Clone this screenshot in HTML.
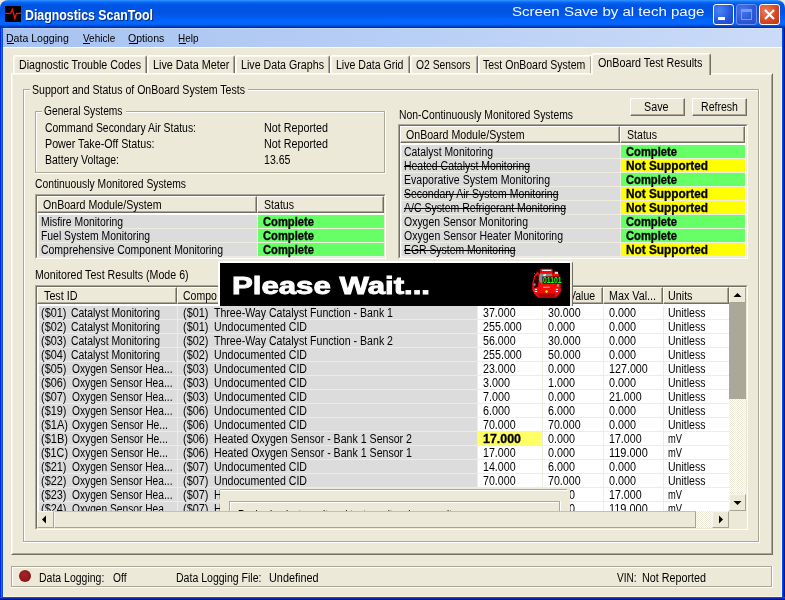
<!DOCTYPE html>
<html><head><meta charset="utf-8"><title>Diagnostics ScanTool</title>
<style>
html,body{margin:0;padding:0;}
body{width:785px;height:600px;overflow:hidden;background:#ece9d8;font-family:'Liberation Sans', sans-serif;font-size:11px;}
#w{position:relative;width:785px;height:600px;overflow:hidden;background:#ece9d8;will-change:transform;}
#w div{position:absolute;}
.t{position:absolute;white-space:pre;transform-origin:0 50%;}
</style></head><body><div id="w">
<div style="left:0px;top:0px;width:785px;height:28px;background:linear-gradient(to bottom,#3d95ff 0px,#1a80ff 1px,#0a72fc 2px,#0362f0 3px,#0056e5 4.5px,#0054e3 6px,#0054e3 13px,#0058ea 15px,#005ef4 18px,#0266fe 21px,#0267ff 24px,#005ceb 25px,#0046cc 26px,#0032a6 27.5px,#002f9e 28px);border-radius:8px 8px 0 0;"></div>
<div style="left:0px;top:28px;width:1px;height:572px;background:#0428d8"></div>
<div style="left:1px;top:28px;width:1px;height:572px;background:#166af0"></div>
<div style="left:2px;top:28px;width:1px;height:572px;background:#0450e0"></div>
<div style="left:3px;top:48px;width:1px;height:549px;background:#fdf4d8"></div>
<div style="left:781px;top:48px;width:1px;height:549px;background:#fdf4d8"></div>
<div style="left:3px;top:596px;width:779px;height:1px;background:#fdf4d8"></div>
<div style="left:782px;top:28px;width:1px;height:572px;background:#0a4ae8"></div>
<div style="left:783px;top:28px;width:1px;height:572px;background:#0430c0"></div>
<div style="left:784px;top:28px;width:1px;height:572px;background:#001590"></div>
<div style="left:0px;top:597px;width:785px;height:1px;background:#0a50f0"></div>
<div style="left:0px;top:598px;width:785px;height:1px;background:#0428b0"></div>
<div style="left:0px;top:599px;width:785px;height:1px;background:#001488"></div>
<div style="left:3px;top:28px;width:779px;height:19px;background:linear-gradient(to right,#a8c3f2 0%,#b7cef5 50%,#cbdbf8 100%);"></div>
<div style="left:3px;top:28px;width:779px;height:1px;background:rgba(255,255,255,0.25)"></div>
<div style="left:3px;top:47px;width:779px;height:1px;background:#fdfcf8"></div>
<div style="left:5px;top:6px;width:16px;height:16px;background:#000;"><svg width="16" height="16" viewBox="0 0 16 16" style="position:absolute;left:0;top:0"><path d="M0 7.4 H5.6 L7.3 3.2 L9.9 12.6 L11.4 7.4 H16" stroke="#ff1010" stroke-width="1.3" fill="none"/></svg></div>
<span class="t" style="left:26.00px;top:7.15px;font-size:14px;line-height:18px;color:#0a2a80;transform:scaleX(0.8814);font-weight:bold;">Diagnostics ScanTool</span>
<span class="t" style="left:25.00px;top:6.15px;font-size:14px;line-height:18px;color:#fff;transform:scaleX(0.8814);font-weight:bold;">Diagnostics ScanTool</span>
<span class="t" style="left:512.00px;top:3.00px;font-size:13px;line-height:17px;color:#f4f8ff;transform:scaleX(1.1580);">Screen Save by al tech page</span>
<div style="left:713px;top:4px;width:21px;height:21px;border:1px solid #fff;border-radius:3px;box-sizing:border-box;background:radial-gradient(circle at 30% 30%,#4c84f4,#2456dc 60%,#1a44c8);"><div style="left:4px;top:12px;width:7px;height:3px;background:#fff"></div></div>
<div style="left:736px;top:4px;width:21px;height:21px;border:1px solid #fff;border-radius:3px;box-sizing:border-box;border-color:#6f8fe8;background:radial-gradient(circle at 30% 30%,#4677ee,#2a58d8 60%,#2450cc);"><div style="left:4px;top:4px;width:11px;height:11px;box-sizing:border-box;border:1px solid #7c98ea;border-top:3px solid #7c98ea"></div></div>
<div style="left:759px;top:4px;width:21px;height:21px;border:1px solid #fff;border-radius:3px;box-sizing:border-box;background:radial-gradient(circle at 30% 30%,#ee7a58,#d8441c 60%,#c03410);"><svg width="19" height="19" viewBox="0 0 19 19" style="position:absolute;left:0;top:0"><path d="M5 5 L14 14 M14 5 L5 14" stroke="#fff" stroke-width="2.2"/></svg></div>
<span class="t" style="left:6.00px;top:30.99px;font-size:11px;line-height:14px;color:#000;transform:scaleX(0.9595);">Data Logging</span>
<div style="left:7px;top:43px;width:7px;height:1px;background:#000"></div>
<span class="t" style="left:82.50px;top:30.99px;font-size:11px;line-height:14px;color:#000;transform:scaleX(0.9074);">Vehicle</span>
<div style="left:83px;top:43px;width:7px;height:1px;background:#000"></div>
<span class="t" style="left:128.20px;top:30.99px;font-size:11px;line-height:14px;color:#000;transform:scaleX(0.9599);">Options</span>
<div style="left:129px;top:43px;width:8px;height:1px;background:#000"></div>
<span class="t" style="left:177.80px;top:30.99px;font-size:11px;line-height:14px;color:#000;transform:scaleX(0.9017);">Help</span>
<div style="left:179px;top:43px;width:7px;height:1px;background:#000"></div>
<div style="left:11px;top:73px;width:762px;height:482px;box-sizing:border-box;border-left:1px solid #fff;border-top:1px solid #fff;border-right:1px solid #716f64;border-bottom:1px solid #716f64;"></div>
<div style="left:12px;top:74px;width:760px;height:480px;box-sizing:border-box;border-right:1px solid #aca899;border-bottom:1px solid #aca899;border-left:1px solid #f6f5ee;border-top:1px solid #f6f5ee;"></div>
<div style="left:13px;top:55px;width:134px;height:18px;box-sizing:border-box;border-left:1px solid #fff;border-top:1px solid #fff;border-right:1px solid #716f64;border-radius:3px 3px 0 0;background:#ece9d8;box-shadow:inset 1px 1px 0 #f8f7f0,inset -1px 0 0 #aca899;"></div>
<span class="t" style="left:19.00px;top:57.24px;font-size:12px;line-height:16px;color:#000;transform:scaleX(0.8878);">Diagnostic Trouble Codes</span>
<div style="left:147px;top:55px;width:88px;height:18px;box-sizing:border-box;border-left:1px solid #fff;border-top:1px solid #fff;border-right:1px solid #716f64;border-radius:3px 3px 0 0;background:#ece9d8;box-shadow:inset 1px 1px 0 #f8f7f0,inset -1px 0 0 #aca899;"></div>
<span class="t" style="left:152.50px;top:57.24px;font-size:12px;line-height:16px;color:#000;transform:scaleX(0.9020);">Live Data Meter</span>
<div style="left:235px;top:55px;width:95px;height:18px;box-sizing:border-box;border-left:1px solid #fff;border-top:1px solid #fff;border-right:1px solid #716f64;border-radius:3px 3px 0 0;background:#ece9d8;box-shadow:inset 1px 1px 0 #f8f7f0,inset -1px 0 0 #aca899;"></div>
<span class="t" style="left:240.50px;top:57.24px;font-size:12px;line-height:16px;color:#000;transform:scaleX(0.8887);">Live Data Graphs</span>
<div style="left:330px;top:55px;width:80px;height:18px;box-sizing:border-box;border-left:1px solid #fff;border-top:1px solid #fff;border-right:1px solid #716f64;border-radius:3px 3px 0 0;background:#ece9d8;box-shadow:inset 1px 1px 0 #f8f7f0,inset -1px 0 0 #aca899;"></div>
<span class="t" style="left:335.90px;top:57.24px;font-size:12px;line-height:16px;color:#000;transform:scaleX(0.8800);">Live Data Grid</span>
<div style="left:410px;top:55px;width:68px;height:18px;box-sizing:border-box;border-left:1px solid #fff;border-top:1px solid #fff;border-right:1px solid #716f64;border-radius:3px 3px 0 0;background:#ece9d8;box-shadow:inset 1px 1px 0 #f8f7f0,inset -1px 0 0 #aca899;"></div>
<span class="t" style="left:416.00px;top:57.24px;font-size:12px;line-height:16px;color:#000;transform:scaleX(0.8600);">O2 Sensors</span>
<div style="left:478px;top:55px;width:114px;height:18px;box-sizing:border-box;border-left:1px solid #fff;border-top:1px solid #fff;border-right:1px solid #716f64;border-radius:3px 3px 0 0;background:#ece9d8;box-shadow:inset 1px 1px 0 #f8f7f0,inset -1px 0 0 #aca899;"></div>
<span class="t" style="left:483.20px;top:57.24px;font-size:12px;line-height:16px;color:#000;transform:scaleX(0.8765);">Test OnBoard System</span>
<div style="left:591px;top:53px;width:120px;height:22px;box-sizing:border-box;border-left:1px solid #fff;border-top:1px solid #fff;border-right:1px solid #716f64;border-radius:3px 3px 0 0;background:#ece9d8;box-shadow:inset 1px 1px 0 #f8f7f0,inset -1px 0 0 #aca899;"></div>
<span class="t" style="left:598.00px;top:55.24px;font-size:12px;line-height:16px;color:#000;transform:scaleX(0.8969);">OnBoard Test Results</span>
<div style="left:23px;top:89px;width:736px;height:453px;box-sizing:border-box;border:1px solid #aca899;"></div>
<div style="left:24px;top:90px;width:734px;height:451px;box-sizing:border-box;border:1px solid #fff;border-right:none;border-bottom:none;"></div>
<div style="left:759px;top:89px;width:1px;height:454px;background:#fff"></div>
<div style="left:23px;top:542px;width:737px;height:1px;background:#fff"></div>
<div style="left:30px;top:84px;width:218px;height:12px;background:#ece9d8"></div>
<span class="t" style="left:32.30px;top:82.24px;font-size:12px;line-height:16px;color:#000;transform:scaleX(0.8804);">Support and Status of OnBoard System Tests</span>
<div style="left:35px;top:111px;width:350px;height:62px;box-sizing:border-box;border:1px solid #aca899;"></div>
<div style="left:36px;top:112px;width:348px;height:60px;box-sizing:border-box;border:1px solid #fff;border-right:none;border-bottom:none;"></div>
<div style="left:385px;top:111px;width:1px;height:63px;background:#fff"></div>
<div style="left:35px;top:173px;width:351px;height:1px;background:#fff"></div>
<div style="left:42px;top:106px;width:84px;height:12px;background:#ece9d8"></div>
<span class="t" style="left:44.20px;top:103.24px;font-size:12px;line-height:16px;color:#000;transform:scaleX(0.8528);">General Systems</span>
<span class="t" style="left:45.00px;top:120.24px;font-size:12px;line-height:16px;color:#000;transform:scaleX(0.8673);">Command Secondary Air Status:</span>
<span class="t" style="left:45.00px;top:136.24px;font-size:12px;line-height:16px;color:#000;transform:scaleX(0.8906);">Power Take-Off Status:</span>
<span class="t" style="left:45.00px;top:152.24px;font-size:12px;line-height:16px;color:#000;transform:scaleX(0.8733);">Battery Voltage:</span>
<span class="t" style="left:264.10px;top:120.24px;font-size:12px;line-height:16px;color:#000;transform:scaleX(0.8967);">Not Reported</span>
<span class="t" style="left:264.10px;top:136.24px;font-size:12px;line-height:16px;color:#000;transform:scaleX(0.8967);">Not Reported</span>
<span class="t" style="left:264.10px;top:152.24px;font-size:12px;line-height:16px;color:#000;transform:scaleX(0.8824);">13.65</span>
<span class="t" style="left:35.30px;top:176.24px;font-size:12px;line-height:16px;color:#000;transform:scaleX(0.8608);">Continuously Monitored Systems</span>
<span class="t" style="left:398.50px;top:107.24px;font-size:12px;line-height:16px;color:#000;transform:scaleX(0.8639);">Non-Continuously Monitored Systems</span>
<span class="t" style="left:35.20px;top:267.24px;font-size:12px;line-height:16px;color:#000;transform:scaleX(0.8869);">Monitored Test Results (Mode 6)</span>
<div style="left:630px;top:98px;width:55px;height:18px;box-sizing:border-box;border-left:1px solid #fff;border-top:1px solid #fff;border-right:1px solid #716f64;border-bottom:1px solid #716f64;background:#ece9d8;"></div>
<div style="left:631px;top:99px;width:53px;height:16px;box-sizing:border-box;border-right:1px solid #aca899;border-bottom:1px solid #aca899;"></div>
<span class="t" style="left:644.00px;top:98.84px;font-size:12px;line-height:16px;color:#000;transform:scaleX(0.8955);">Save</span>
<div style="left:692px;top:98px;width:55px;height:18px;box-sizing:border-box;border-left:1px solid #fff;border-top:1px solid #fff;border-right:1px solid #716f64;border-bottom:1px solid #716f64;background:#ece9d8;"></div>
<div style="left:693px;top:99px;width:53px;height:16px;box-sizing:border-box;border-right:1px solid #aca899;border-bottom:1px solid #aca899;"></div>
<span class="t" style="left:701.00px;top:98.84px;font-size:12px;line-height:16px;color:#000;transform:scaleX(0.8803);">Refresh</span>
<div style="left:35px;top:194px;width:351px;height:65px;box-sizing:border-box;border-left:1px solid #aca899;border-top:1px solid #aca899;border-right:1px solid #fff;border-bottom:1px solid #fff;background:#fff;"></div>
<div style="left:36px;top:195px;width:349px;height:63px;box-sizing:border-box;border-left:1px solid #716f64;border-top:1px solid #716f64;border-right:1px solid #ece9d8;border-bottom:1px solid #ece9d8;"></div>
<div style="left:37px;top:196px;width:220px;height:17px;box-sizing:border-box;border-left:1px solid #fff;border-top:1px solid #fff;border-right:1px solid #716f64;border-bottom:1px solid #716f64;background:#ece9d8;"></div>
<div style="left:38px;top:197px;width:218px;height:15px;box-sizing:border-box;border-right:1px solid #aca899;border-bottom:1px solid #aca899;"></div>
<span class="t" style="left:43.00px;top:197.24px;font-size:12px;line-height:16px;color:#000;transform:scaleX(0.8839);">OnBoard Module/System</span>
<div style="left:257px;top:196px;width:127px;height:17px;box-sizing:border-box;border-left:1px solid #fff;border-top:1px solid #fff;border-right:1px solid #716f64;border-bottom:1px solid #716f64;background:#ece9d8;"></div>
<div style="left:258px;top:197px;width:125px;height:15px;box-sizing:border-box;border-right:1px solid #aca899;border-bottom:1px solid #aca899;"></div>
<span class="t" style="left:263.50px;top:197.24px;font-size:12px;line-height:16px;color:#000;transform:scaleX(0.8815);">Status</span>
<div style="left:38px;top:215px;width:346px;height:42px;background:#efece0"></div>
<div style="left:39px;top:215px;width:218px;height:13px;background:#dcdcdc"></div>
<div style="left:258px;top:215px;width:126px;height:13px;background:#66ff66"></div>
<span class="t" style="left:41.00px;top:214.24px;font-size:12px;line-height:16px;color:#000;transform:scaleX(0.8659);">Misfire Monitoring</span>
<span class="t" style="left:263.00px;top:214.24px;font-size:12px;line-height:16px;color:#000;transform:scaleX(0.9326);font-weight:bold;-webkit-text-stroke:0.3px #000;">Complete</span>
<div style="left:39px;top:229px;width:218px;height:13px;background:#dcdcdc"></div>
<div style="left:258px;top:229px;width:126px;height:13px;background:#66ff66"></div>
<span class="t" style="left:41.00px;top:228.24px;font-size:12px;line-height:16px;color:#000;transform:scaleX(0.8648);">Fuel System Monitoring</span>
<span class="t" style="left:263.00px;top:228.24px;font-size:12px;line-height:16px;color:#000;transform:scaleX(0.9326);font-weight:bold;-webkit-text-stroke:0.3px #000;">Complete</span>
<div style="left:39px;top:243px;width:218px;height:13px;background:#dcdcdc"></div>
<div style="left:258px;top:243px;width:126px;height:13px;background:#66ff66"></div>
<span class="t" style="left:41.00px;top:242.24px;font-size:12px;line-height:16px;color:#000;transform:scaleX(0.8717);">Comprehensive Component Monitoring</span>
<span class="t" style="left:263.00px;top:242.24px;font-size:12px;line-height:16px;color:#000;transform:scaleX(0.9326);font-weight:bold;-webkit-text-stroke:0.3px #000;">Complete</span>
<div style="left:398px;top:124px;width:350px;height:135px;box-sizing:border-box;border-left:1px solid #aca899;border-top:1px solid #aca899;border-right:1px solid #fff;border-bottom:1px solid #fff;background:#fff;"></div>
<div style="left:399px;top:125px;width:348px;height:133px;box-sizing:border-box;border-left:1px solid #716f64;border-top:1px solid #716f64;border-right:1px solid #ece9d8;border-bottom:1px solid #ece9d8;"></div>
<div style="left:400px;top:126px;width:220px;height:17px;box-sizing:border-box;border-left:1px solid #fff;border-top:1px solid #fff;border-right:1px solid #716f64;border-bottom:1px solid #716f64;background:#ece9d8;"></div>
<div style="left:401px;top:127px;width:218px;height:15px;box-sizing:border-box;border-right:1px solid #aca899;border-bottom:1px solid #aca899;"></div>
<span class="t" style="left:406.00px;top:127.24px;font-size:12px;line-height:16px;color:#000;transform:scaleX(0.8839);">OnBoard Module/System</span>
<div style="left:620px;top:126px;width:125px;height:17px;box-sizing:border-box;border-left:1px solid #fff;border-top:1px solid #fff;border-right:1px solid #716f64;border-bottom:1px solid #716f64;background:#ece9d8;"></div>
<div style="left:621px;top:127px;width:123px;height:15px;box-sizing:border-box;border-right:1px solid #aca899;border-bottom:1px solid #aca899;"></div>
<span class="t" style="left:626.50px;top:127.24px;font-size:12px;line-height:16px;color:#000;transform:scaleX(0.8815);">Status</span>
<div style="left:401px;top:145px;width:344px;height:112px;background:#efece0"></div>
<div style="left:402px;top:145px;width:218px;height:13px;background:#dcdcdc"></div>
<div style="left:621px;top:145px;width:124px;height:13px;background:#66ff66"></div>
<span class="t" style="left:404.00px;top:144.24px;font-size:12px;line-height:16px;color:#000;transform:scaleX(0.8664);">Catalyst Monitoring</span>
<span class="t" style="left:626.00px;top:144.24px;font-size:12px;line-height:16px;color:#000;transform:scaleX(0.9326);font-weight:bold;-webkit-text-stroke:0.3px #000;">Complete</span>
<div style="left:402px;top:159px;width:218px;height:13px;background:#dcdcdc"></div>
<div style="left:621px;top:159px;width:124px;height:13px;background:#ffff00"></div>
<span class="t" style="left:404.00px;top:158.24px;font-size:12px;line-height:16px;color:#000;transform:scaleX(0.8705);text-decoration:line-through;">Heated Catalyst Monitoring</span>
<span class="t" style="left:626.00px;top:158.24px;font-size:12px;line-height:16px;color:#000;transform:scaleX(0.9841);font-weight:bold;-webkit-text-stroke:0.3px #000;">Not Supported</span>
<div style="left:402px;top:173px;width:218px;height:13px;background:#dcdcdc"></div>
<div style="left:621px;top:173px;width:124px;height:13px;background:#66ff66"></div>
<span class="t" style="left:404.00px;top:172.24px;font-size:12px;line-height:16px;color:#000;transform:scaleX(0.8791);">Evaporative System Monitoring</span>
<span class="t" style="left:626.00px;top:172.24px;font-size:12px;line-height:16px;color:#000;transform:scaleX(0.9326);font-weight:bold;-webkit-text-stroke:0.3px #000;">Complete</span>
<div style="left:402px;top:187px;width:218px;height:13px;background:#dcdcdc"></div>
<div style="left:621px;top:187px;width:124px;height:13px;background:#ffff00"></div>
<span class="t" style="left:404.00px;top:186.24px;font-size:12px;line-height:16px;color:#000;transform:scaleX(0.8708);text-decoration:line-through;">Secondary Air System Monitoring</span>
<span class="t" style="left:626.00px;top:186.24px;font-size:12px;line-height:16px;color:#000;transform:scaleX(0.9841);font-weight:bold;-webkit-text-stroke:0.3px #000;">Not Supported</span>
<div style="left:402px;top:201px;width:218px;height:13px;background:#dcdcdc"></div>
<div style="left:621px;top:201px;width:124px;height:13px;background:#ffff00"></div>
<span class="t" style="left:404.00px;top:200.24px;font-size:12px;line-height:16px;color:#000;transform:scaleX(0.8738);text-decoration:line-through;">A/C System Refrigerant Monitoring</span>
<span class="t" style="left:626.00px;top:200.24px;font-size:12px;line-height:16px;color:#000;transform:scaleX(0.9841);font-weight:bold;-webkit-text-stroke:0.3px #000;">Not Supported</span>
<div style="left:402px;top:215px;width:218px;height:13px;background:#dcdcdc"></div>
<div style="left:621px;top:215px;width:124px;height:13px;background:#66ff66"></div>
<span class="t" style="left:404.00px;top:214.24px;font-size:12px;line-height:16px;color:#000;transform:scaleX(0.8728);">Oxygen Sensor Monitoring</span>
<span class="t" style="left:626.00px;top:214.24px;font-size:12px;line-height:16px;color:#000;transform:scaleX(0.9326);font-weight:bold;-webkit-text-stroke:0.3px #000;">Complete</span>
<div style="left:402px;top:229px;width:218px;height:13px;background:#dcdcdc"></div>
<div style="left:621px;top:229px;width:124px;height:13px;background:#66ff66"></div>
<span class="t" style="left:404.00px;top:228.24px;font-size:12px;line-height:16px;color:#000;transform:scaleX(0.8763);">Oxygen Sensor Heater Monitoring</span>
<span class="t" style="left:626.00px;top:228.24px;font-size:12px;line-height:16px;color:#000;transform:scaleX(0.9326);font-weight:bold;-webkit-text-stroke:0.3px #000;">Complete</span>
<div style="left:402px;top:243px;width:218px;height:13px;background:#dcdcdc"></div>
<div style="left:621px;top:243px;width:124px;height:13px;background:#ffff00"></div>
<span class="t" style="left:404.00px;top:242.24px;font-size:12px;line-height:16px;color:#000;transform:scaleX(0.8662);text-decoration:line-through;">EGR System Monitoring</span>
<span class="t" style="left:626.00px;top:242.24px;font-size:12px;line-height:16px;color:#000;transform:scaleX(0.9841);font-weight:bold;-webkit-text-stroke:0.3px #000;">Not Supported</span>
<div style="left:35px;top:285px;width:713px;height:245px;box-sizing:border-box;border-left:1px solid #aca899;border-top:1px solid #aca899;border-right:1px solid #fff;border-bottom:1px solid #fff;background:#fff;"></div>
<div style="left:36px;top:286px;width:711px;height:243px;box-sizing:border-box;border-left:1px solid #716f64;border-top:1px solid #716f64;border-right:1px solid #ece9d8;border-bottom:1px solid #ece9d8;"></div>
<div style="left:37px;top:287px;width:140px;height:17px;box-sizing:border-box;border-left:1px solid #fff;border-top:1px solid #fff;border-right:1px solid #716f64;border-bottom:1px solid #716f64;background:#ece9d8;"></div>
<div style="left:38px;top:288px;width:138px;height:15px;box-sizing:border-box;border-right:1px solid #aca899;border-bottom:1px solid #aca899;"></div>
<span class="t" style="left:43.50px;top:288.24px;font-size:12px;line-height:16px;color:#000;transform:scaleX(0.8971);">Test ID</span>
<div style="left:177px;top:287px;width:300px;height:17px;box-sizing:border-box;border-left:1px solid #fff;border-top:1px solid #fff;border-right:1px solid #716f64;border-bottom:1px solid #716f64;background:#ece9d8;"></div>
<div style="left:178px;top:288px;width:298px;height:15px;box-sizing:border-box;border-right:1px solid #aca899;border-bottom:1px solid #aca899;"></div>
<span class="t" style="left:183.00px;top:288.24px;font-size:12px;line-height:16px;color:#000;transform:scaleX(0.8750);">Compo</span>
<div style="left:477px;top:287px;width:65px;height:17px;box-sizing:border-box;border-left:1px solid #fff;border-top:1px solid #fff;border-right:1px solid #716f64;border-bottom:1px solid #716f64;background:#ece9d8;"></div>
<div style="left:478px;top:288px;width:63px;height:15px;box-sizing:border-box;border-right:1px solid #aca899;border-bottom:1px solid #aca899;"></div>
<div style="left:542px;top:287px;width:61px;height:17px;box-sizing:border-box;border-left:1px solid #fff;border-top:1px solid #fff;border-right:1px solid #716f64;border-bottom:1px solid #716f64;background:#ece9d8;"></div>
<div style="left:543px;top:288px;width:59px;height:15px;box-sizing:border-box;border-right:1px solid #aca899;border-bottom:1px solid #aca899;"></div>
<span class="t" style="left:568.80px;top:288.24px;font-size:12px;line-height:16px;color:#000;transform:scaleX(0.8750);">Value</span>
<div style="left:603px;top:287px;width:60px;height:17px;box-sizing:border-box;border-left:1px solid #fff;border-top:1px solid #fff;border-right:1px solid #716f64;border-bottom:1px solid #716f64;background:#ece9d8;"></div>
<div style="left:604px;top:288px;width:58px;height:15px;box-sizing:border-box;border-right:1px solid #aca899;border-bottom:1px solid #aca899;"></div>
<span class="t" style="left:608.50px;top:288.24px;font-size:12px;line-height:16px;color:#000;transform:scaleX(0.8958);">Max Val...</span>
<div style="left:663px;top:287px;width:66px;height:17px;box-sizing:border-box;border-left:1px solid #fff;border-top:1px solid #fff;border-right:1px solid #716f64;border-bottom:1px solid #716f64;background:#ece9d8;"></div>
<div style="left:664px;top:288px;width:64px;height:15px;box-sizing:border-box;border-right:1px solid #aca899;border-bottom:1px solid #aca899;"></div>
<span class="t" style="left:668.00px;top:288.24px;font-size:12px;line-height:16px;color:#000;transform:scaleX(0.8960);">Units</span>
<div style="left:729px;top:287px;width:17px;height:17px;background:#ece9d8"></div>
<div style="left:37px;top:304px;width:692px;height:2px;background:#fff"></div>
<div style="left:37px;top:306px;width:2px;height:205px;background:#fff"></div>
<div style="left:39px;top:306px;width:690px;height:205px;background:#efece0"></div>
<div style="left:37px;top:305px;width:692px;height:206px;overflow:hidden">
<div style="left:2px;top:1px;width:138px;height:13px;background:#dcdcdc"></div>
<div style="left:141px;top:1px;width:299px;height:13px;background:#dcdcdc"></div>
<div style="left:441px;top:1px;width:64px;height:13px;background:#fff"></div>
<div style="left:506px;top:1px;width:60px;height:13px;background:#fff"></div>
<div style="left:567px;top:1px;width:59px;height:13px;background:#fff"></div>
<div style="left:627px;top:1px;width:65px;height:13px;background:#fff"></div>
<div style="left:2px;top:15px;width:138px;height:13px;background:#dcdcdc"></div>
<div style="left:141px;top:15px;width:299px;height:13px;background:#dcdcdc"></div>
<div style="left:441px;top:15px;width:64px;height:13px;background:#fff"></div>
<div style="left:506px;top:15px;width:60px;height:13px;background:#fff"></div>
<div style="left:567px;top:15px;width:59px;height:13px;background:#fff"></div>
<div style="left:627px;top:15px;width:65px;height:13px;background:#fff"></div>
<div style="left:2px;top:29px;width:138px;height:13px;background:#dcdcdc"></div>
<div style="left:141px;top:29px;width:299px;height:13px;background:#dcdcdc"></div>
<div style="left:441px;top:29px;width:64px;height:13px;background:#fff"></div>
<div style="left:506px;top:29px;width:60px;height:13px;background:#fff"></div>
<div style="left:567px;top:29px;width:59px;height:13px;background:#fff"></div>
<div style="left:627px;top:29px;width:65px;height:13px;background:#fff"></div>
<div style="left:2px;top:43px;width:138px;height:13px;background:#dcdcdc"></div>
<div style="left:141px;top:43px;width:299px;height:13px;background:#dcdcdc"></div>
<div style="left:441px;top:43px;width:64px;height:13px;background:#fff"></div>
<div style="left:506px;top:43px;width:60px;height:13px;background:#fff"></div>
<div style="left:567px;top:43px;width:59px;height:13px;background:#fff"></div>
<div style="left:627px;top:43px;width:65px;height:13px;background:#fff"></div>
<div style="left:2px;top:57px;width:138px;height:13px;background:#dcdcdc"></div>
<div style="left:141px;top:57px;width:299px;height:13px;background:#dcdcdc"></div>
<div style="left:441px;top:57px;width:64px;height:13px;background:#fff"></div>
<div style="left:506px;top:57px;width:60px;height:13px;background:#fff"></div>
<div style="left:567px;top:57px;width:59px;height:13px;background:#fff"></div>
<div style="left:627px;top:57px;width:65px;height:13px;background:#fff"></div>
<div style="left:2px;top:71px;width:138px;height:13px;background:#dcdcdc"></div>
<div style="left:141px;top:71px;width:299px;height:13px;background:#dcdcdc"></div>
<div style="left:441px;top:71px;width:64px;height:13px;background:#fff"></div>
<div style="left:506px;top:71px;width:60px;height:13px;background:#fff"></div>
<div style="left:567px;top:71px;width:59px;height:13px;background:#fff"></div>
<div style="left:627px;top:71px;width:65px;height:13px;background:#fff"></div>
<div style="left:2px;top:85px;width:138px;height:13px;background:#dcdcdc"></div>
<div style="left:141px;top:85px;width:299px;height:13px;background:#dcdcdc"></div>
<div style="left:441px;top:85px;width:64px;height:13px;background:#fff"></div>
<div style="left:506px;top:85px;width:60px;height:13px;background:#fff"></div>
<div style="left:567px;top:85px;width:59px;height:13px;background:#fff"></div>
<div style="left:627px;top:85px;width:65px;height:13px;background:#fff"></div>
<div style="left:2px;top:99px;width:138px;height:13px;background:#dcdcdc"></div>
<div style="left:141px;top:99px;width:299px;height:13px;background:#dcdcdc"></div>
<div style="left:441px;top:99px;width:64px;height:13px;background:#fff"></div>
<div style="left:506px;top:99px;width:60px;height:13px;background:#fff"></div>
<div style="left:567px;top:99px;width:59px;height:13px;background:#fff"></div>
<div style="left:627px;top:99px;width:65px;height:13px;background:#fff"></div>
<div style="left:2px;top:113px;width:138px;height:13px;background:#dcdcdc"></div>
<div style="left:141px;top:113px;width:299px;height:13px;background:#dcdcdc"></div>
<div style="left:441px;top:113px;width:64px;height:13px;background:#fff"></div>
<div style="left:506px;top:113px;width:60px;height:13px;background:#fff"></div>
<div style="left:567px;top:113px;width:59px;height:13px;background:#fff"></div>
<div style="left:627px;top:113px;width:65px;height:13px;background:#fff"></div>
<div style="left:2px;top:127px;width:138px;height:13px;background:#dcdcdc"></div>
<div style="left:141px;top:127px;width:299px;height:13px;background:#dcdcdc"></div>
<div style="left:441px;top:127px;width:64px;height:13px;background:#ffff66"></div>
<div style="left:506px;top:127px;width:60px;height:13px;background:#fff"></div>
<div style="left:567px;top:127px;width:59px;height:13px;background:#fff"></div>
<div style="left:627px;top:127px;width:65px;height:13px;background:#fff"></div>
<div style="left:2px;top:141px;width:138px;height:13px;background:#dcdcdc"></div>
<div style="left:141px;top:141px;width:299px;height:13px;background:#dcdcdc"></div>
<div style="left:441px;top:141px;width:64px;height:13px;background:#fff"></div>
<div style="left:506px;top:141px;width:60px;height:13px;background:#fff"></div>
<div style="left:567px;top:141px;width:59px;height:13px;background:#fff"></div>
<div style="left:627px;top:141px;width:65px;height:13px;background:#fff"></div>
<div style="left:2px;top:155px;width:138px;height:13px;background:#dcdcdc"></div>
<div style="left:141px;top:155px;width:299px;height:13px;background:#dcdcdc"></div>
<div style="left:441px;top:155px;width:64px;height:13px;background:#fff"></div>
<div style="left:506px;top:155px;width:60px;height:13px;background:#fff"></div>
<div style="left:567px;top:155px;width:59px;height:13px;background:#fff"></div>
<div style="left:627px;top:155px;width:65px;height:13px;background:#fff"></div>
<div style="left:2px;top:169px;width:138px;height:13px;background:#dcdcdc"></div>
<div style="left:141px;top:169px;width:299px;height:13px;background:#dcdcdc"></div>
<div style="left:441px;top:169px;width:64px;height:13px;background:#fff"></div>
<div style="left:506px;top:169px;width:60px;height:13px;background:#fff"></div>
<div style="left:567px;top:169px;width:59px;height:13px;background:#fff"></div>
<div style="left:627px;top:169px;width:65px;height:13px;background:#fff"></div>
<div style="left:2px;top:183px;width:138px;height:13px;background:#dcdcdc"></div>
<div style="left:141px;top:183px;width:299px;height:13px;background:#dcdcdc"></div>
<div style="left:441px;top:183px;width:64px;height:13px;background:#fff"></div>
<div style="left:506px;top:183px;width:60px;height:13px;background:#fff"></div>
<div style="left:567px;top:183px;width:59px;height:13px;background:#fff"></div>
<div style="left:627px;top:183px;width:65px;height:13px;background:#fff"></div>
<div style="left:2px;top:197px;width:138px;height:13px;background:#dcdcdc"></div>
<div style="left:141px;top:197px;width:299px;height:13px;background:#dcdcdc"></div>
<div style="left:441px;top:197px;width:64px;height:13px;background:#fff"></div>
<div style="left:506px;top:197px;width:60px;height:13px;background:#fff"></div>
<div style="left:567px;top:197px;width:59px;height:13px;background:#fff"></div>
<div style="left:627px;top:197px;width:65px;height:13px;background:#fff"></div>
</div>
<div style="left:37px;top:305px;width:692px;height:206px;overflow:hidden">
<span class="t" style="left:4.00px;top:-0.26px;font-size:12px;line-height:16px;color:#000;transform:scaleX(0.9102);">($01)</span>
<span class="t" style="left:34.10px;top:-0.26px;font-size:12px;line-height:16px;color:#000;transform:scaleX(0.8664);">Catalyst Monitoring</span>
<span class="t" style="left:146.00px;top:-0.26px;font-size:12px;line-height:16px;color:#000;transform:scaleX(0.9102);">($01)</span>
<span class="t" style="left:176.50px;top:-0.26px;font-size:12px;line-height:16px;color:#000;transform:scaleX(0.8819);">Three-Way Catalyst Function - Bank 1</span>
<span class="t" style="left:446.20px;top:-0.26px;font-size:12px;line-height:16px;color:#000;transform:scaleX(0.8882);">37.000</span>
<span class="t" style="left:511.40px;top:-0.26px;font-size:12px;line-height:16px;color:#000;transform:scaleX(0.8882);">30.000</span>
<span class="t" style="left:571.50px;top:-0.26px;font-size:12px;line-height:16px;color:#000;transform:scaleX(0.8991);">0.000</span>
<span class="t" style="left:630.50px;top:-0.26px;font-size:12px;line-height:16px;color:#000;transform:scaleX(0.8785);">Unitless</span>
<span class="t" style="left:4.00px;top:13.74px;font-size:12px;line-height:16px;color:#000;transform:scaleX(0.9102);">($02)</span>
<span class="t" style="left:34.10px;top:13.74px;font-size:12px;line-height:16px;color:#000;transform:scaleX(0.8664);">Catalyst Monitoring</span>
<span class="t" style="left:146.00px;top:13.74px;font-size:12px;line-height:16px;color:#000;transform:scaleX(0.9102);">($01)</span>
<span class="t" style="left:176.50px;top:13.74px;font-size:12px;line-height:16px;color:#000;transform:scaleX(0.8824);">Undocumented CID</span>
<span class="t" style="left:446.20px;top:13.74px;font-size:12px;line-height:16px;color:#000;transform:scaleX(0.8942);">255.000</span>
<span class="t" style="left:511.40px;top:13.74px;font-size:12px;line-height:16px;color:#000;transform:scaleX(0.8991);">0.000</span>
<span class="t" style="left:571.50px;top:13.74px;font-size:12px;line-height:16px;color:#000;transform:scaleX(0.8991);">0.000</span>
<span class="t" style="left:630.50px;top:13.74px;font-size:12px;line-height:16px;color:#000;transform:scaleX(0.8785);">Unitless</span>
<span class="t" style="left:4.00px;top:27.74px;font-size:12px;line-height:16px;color:#000;transform:scaleX(0.9102);">($03)</span>
<span class="t" style="left:34.10px;top:27.74px;font-size:12px;line-height:16px;color:#000;transform:scaleX(0.8664);">Catalyst Monitoring</span>
<span class="t" style="left:146.00px;top:27.74px;font-size:12px;line-height:16px;color:#000;transform:scaleX(0.9102);">($02)</span>
<span class="t" style="left:176.50px;top:27.74px;font-size:12px;line-height:16px;color:#000;transform:scaleX(0.8819);">Three-Way Catalyst Function - Bank 2</span>
<span class="t" style="left:446.20px;top:27.74px;font-size:12px;line-height:16px;color:#000;transform:scaleX(0.8882);">56.000</span>
<span class="t" style="left:511.40px;top:27.74px;font-size:12px;line-height:16px;color:#000;transform:scaleX(0.8882);">30.000</span>
<span class="t" style="left:571.50px;top:27.74px;font-size:12px;line-height:16px;color:#000;transform:scaleX(0.8991);">0.000</span>
<span class="t" style="left:630.50px;top:27.74px;font-size:12px;line-height:16px;color:#000;transform:scaleX(0.8785);">Unitless</span>
<span class="t" style="left:4.00px;top:41.74px;font-size:12px;line-height:16px;color:#000;transform:scaleX(0.9102);">($04)</span>
<span class="t" style="left:34.10px;top:41.74px;font-size:12px;line-height:16px;color:#000;transform:scaleX(0.8664);">Catalyst Monitoring</span>
<span class="t" style="left:146.00px;top:41.74px;font-size:12px;line-height:16px;color:#000;transform:scaleX(0.9102);">($02)</span>
<span class="t" style="left:176.50px;top:41.74px;font-size:12px;line-height:16px;color:#000;transform:scaleX(0.8824);">Undocumented CID</span>
<span class="t" style="left:446.20px;top:41.74px;font-size:12px;line-height:16px;color:#000;transform:scaleX(0.8942);">255.000</span>
<span class="t" style="left:511.40px;top:41.74px;font-size:12px;line-height:16px;color:#000;transform:scaleX(0.8882);">50.000</span>
<span class="t" style="left:571.50px;top:41.74px;font-size:12px;line-height:16px;color:#000;transform:scaleX(0.8991);">0.000</span>
<span class="t" style="left:630.50px;top:41.74px;font-size:12px;line-height:16px;color:#000;transform:scaleX(0.8785);">Unitless</span>
<span class="t" style="left:4.00px;top:55.74px;font-size:12px;line-height:16px;color:#000;transform:scaleX(0.9102);">($05)</span>
<span class="t" style="left:34.50px;top:55.74px;font-size:12px;line-height:16px;color:#000;transform:scaleX(0.8512);">Oxygen Sensor Hea...</span>
<span class="t" style="left:146.00px;top:55.74px;font-size:12px;line-height:16px;color:#000;transform:scaleX(0.9102);">($03)</span>
<span class="t" style="left:176.50px;top:55.74px;font-size:12px;line-height:16px;color:#000;transform:scaleX(0.8824);">Undocumented CID</span>
<span class="t" style="left:446.20px;top:55.74px;font-size:12px;line-height:16px;color:#000;transform:scaleX(0.8882);">23.000</span>
<span class="t" style="left:511.40px;top:55.74px;font-size:12px;line-height:16px;color:#000;transform:scaleX(0.8991);">0.000</span>
<span class="t" style="left:571.50px;top:55.74px;font-size:12px;line-height:16px;color:#000;transform:scaleX(0.8942);">127.000</span>
<span class="t" style="left:630.50px;top:55.74px;font-size:12px;line-height:16px;color:#000;transform:scaleX(0.8785);">Unitless</span>
<span class="t" style="left:4.00px;top:69.74px;font-size:12px;line-height:16px;color:#000;transform:scaleX(0.9102);">($06)</span>
<span class="t" style="left:34.50px;top:69.74px;font-size:12px;line-height:16px;color:#000;transform:scaleX(0.8512);">Oxygen Sensor Hea...</span>
<span class="t" style="left:146.00px;top:69.74px;font-size:12px;line-height:16px;color:#000;transform:scaleX(0.9102);">($03)</span>
<span class="t" style="left:176.50px;top:69.74px;font-size:12px;line-height:16px;color:#000;transform:scaleX(0.8824);">Undocumented CID</span>
<span class="t" style="left:446.20px;top:69.74px;font-size:12px;line-height:16px;color:#000;transform:scaleX(0.8991);">3.000</span>
<span class="t" style="left:511.40px;top:69.74px;font-size:12px;line-height:16px;color:#000;transform:scaleX(0.8991);">1.000</span>
<span class="t" style="left:571.50px;top:69.74px;font-size:12px;line-height:16px;color:#000;transform:scaleX(0.8991);">0.000</span>
<span class="t" style="left:630.50px;top:69.74px;font-size:12px;line-height:16px;color:#000;transform:scaleX(0.8785);">Unitless</span>
<span class="t" style="left:4.00px;top:83.74px;font-size:12px;line-height:16px;color:#000;transform:scaleX(0.9102);">($07)</span>
<span class="t" style="left:34.50px;top:83.74px;font-size:12px;line-height:16px;color:#000;transform:scaleX(0.8512);">Oxygen Sensor Hea...</span>
<span class="t" style="left:146.00px;top:83.74px;font-size:12px;line-height:16px;color:#000;transform:scaleX(0.9102);">($03)</span>
<span class="t" style="left:176.50px;top:83.74px;font-size:12px;line-height:16px;color:#000;transform:scaleX(0.8824);">Undocumented CID</span>
<span class="t" style="left:446.20px;top:83.74px;font-size:12px;line-height:16px;color:#000;transform:scaleX(0.8991);">7.000</span>
<span class="t" style="left:511.40px;top:83.74px;font-size:12px;line-height:16px;color:#000;transform:scaleX(0.8991);">0.000</span>
<span class="t" style="left:571.50px;top:83.74px;font-size:12px;line-height:16px;color:#000;transform:scaleX(0.8882);">21.000</span>
<span class="t" style="left:630.50px;top:83.74px;font-size:12px;line-height:16px;color:#000;transform:scaleX(0.8785);">Unitless</span>
<span class="t" style="left:4.00px;top:97.74px;font-size:12px;line-height:16px;color:#000;transform:scaleX(0.9102);">($19)</span>
<span class="t" style="left:34.50px;top:97.74px;font-size:12px;line-height:16px;color:#000;transform:scaleX(0.8512);">Oxygen Sensor Hea...</span>
<span class="t" style="left:146.00px;top:97.74px;font-size:12px;line-height:16px;color:#000;transform:scaleX(0.9102);">($06)</span>
<span class="t" style="left:176.50px;top:97.74px;font-size:12px;line-height:16px;color:#000;transform:scaleX(0.8824);">Undocumented CID</span>
<span class="t" style="left:446.20px;top:97.74px;font-size:12px;line-height:16px;color:#000;transform:scaleX(0.8991);">6.000</span>
<span class="t" style="left:511.40px;top:97.74px;font-size:12px;line-height:16px;color:#000;transform:scaleX(0.8991);">6.000</span>
<span class="t" style="left:571.50px;top:97.74px;font-size:12px;line-height:16px;color:#000;transform:scaleX(0.8991);">0.000</span>
<span class="t" style="left:630.50px;top:97.74px;font-size:12px;line-height:16px;color:#000;transform:scaleX(0.8785);">Unitless</span>
<span class="t" style="left:4.00px;top:111.74px;font-size:12px;line-height:16px;color:#000;transform:scaleX(0.9201);">($1A)</span>
<span class="t" style="left:34.50px;top:111.74px;font-size:12px;line-height:16px;color:#000;transform:scaleX(0.8618);">Oxygen Sensor He...</span>
<span class="t" style="left:146.00px;top:111.74px;font-size:12px;line-height:16px;color:#000;transform:scaleX(0.9102);">($06)</span>
<span class="t" style="left:176.50px;top:111.74px;font-size:12px;line-height:16px;color:#000;transform:scaleX(0.8824);">Undocumented CID</span>
<span class="t" style="left:446.20px;top:111.74px;font-size:12px;line-height:16px;color:#000;transform:scaleX(0.8882);">70.000</span>
<span class="t" style="left:511.40px;top:111.74px;font-size:12px;line-height:16px;color:#000;transform:scaleX(0.8882);">70.000</span>
<span class="t" style="left:571.50px;top:111.74px;font-size:12px;line-height:16px;color:#000;transform:scaleX(0.8991);">0.000</span>
<span class="t" style="left:630.50px;top:111.74px;font-size:12px;line-height:16px;color:#000;transform:scaleX(0.8785);">Unitless</span>
<span class="t" style="left:4.00px;top:125.74px;font-size:12px;line-height:16px;color:#000;transform:scaleX(0.9201);">($1B)</span>
<span class="t" style="left:34.50px;top:125.74px;font-size:12px;line-height:16px;color:#000;transform:scaleX(0.8618);">Oxygen Sensor He...</span>
<span class="t" style="left:146.00px;top:125.74px;font-size:12px;line-height:16px;color:#000;transform:scaleX(0.9102);">($06)</span>
<span class="t" style="left:176.50px;top:125.74px;font-size:12px;line-height:16px;color:#000;transform:scaleX(0.8834);">Heated Oxygen Sensor - Bank 1 Sensor 2</span>
<span class="t" style="left:446.20px;top:125.74px;font-size:12px;line-height:16px;color:#000;transform:scaleX(1.0353);font-weight:bold;-webkit-text-stroke:0.3px #000;">17.000</span>
<span class="t" style="left:511.40px;top:125.74px;font-size:12px;line-height:16px;color:#000;transform:scaleX(0.8991);">0.000</span>
<span class="t" style="left:571.50px;top:125.74px;font-size:12px;line-height:16px;color:#000;transform:scaleX(0.8882);">17.000</span>
<span class="t" style="left:630.50px;top:125.74px;font-size:12px;line-height:16px;color:#000;transform:scaleX(0.7778);">mV</span>
<span class="t" style="left:4.00px;top:139.74px;font-size:12px;line-height:16px;color:#000;transform:scaleX(0.8995);">($1C)</span>
<span class="t" style="left:34.50px;top:139.74px;font-size:12px;line-height:16px;color:#000;transform:scaleX(0.8618);">Oxygen Sensor He...</span>
<span class="t" style="left:146.00px;top:139.74px;font-size:12px;line-height:16px;color:#000;transform:scaleX(0.9102);">($06)</span>
<span class="t" style="left:176.50px;top:139.74px;font-size:12px;line-height:16px;color:#000;transform:scaleX(0.8834);">Heated Oxygen Sensor - Bank 1 Sensor 1</span>
<span class="t" style="left:446.20px;top:139.74px;font-size:12px;line-height:16px;color:#000;transform:scaleX(0.8882);">17.000</span>
<span class="t" style="left:511.40px;top:139.74px;font-size:12px;line-height:16px;color:#000;transform:scaleX(0.8991);">0.000</span>
<span class="t" style="left:571.50px;top:139.74px;font-size:12px;line-height:16px;color:#000;transform:scaleX(0.9129);">119.000</span>
<span class="t" style="left:630.50px;top:139.74px;font-size:12px;line-height:16px;color:#000;transform:scaleX(0.7778);">mV</span>
<span class="t" style="left:4.00px;top:153.74px;font-size:12px;line-height:16px;color:#000;transform:scaleX(0.9102);">($21)</span>
<span class="t" style="left:34.50px;top:153.74px;font-size:12px;line-height:16px;color:#000;transform:scaleX(0.8512);">Oxygen Sensor Hea...</span>
<span class="t" style="left:146.00px;top:153.74px;font-size:12px;line-height:16px;color:#000;transform:scaleX(0.9102);">($07)</span>
<span class="t" style="left:176.50px;top:153.74px;font-size:12px;line-height:16px;color:#000;transform:scaleX(0.8824);">Undocumented CID</span>
<span class="t" style="left:446.20px;top:153.74px;font-size:12px;line-height:16px;color:#000;transform:scaleX(0.8882);">14.000</span>
<span class="t" style="left:511.40px;top:153.74px;font-size:12px;line-height:16px;color:#000;transform:scaleX(0.8991);">6.000</span>
<span class="t" style="left:571.50px;top:153.74px;font-size:12px;line-height:16px;color:#000;transform:scaleX(0.8991);">0.000</span>
<span class="t" style="left:630.50px;top:153.74px;font-size:12px;line-height:16px;color:#000;transform:scaleX(0.8785);">Unitless</span>
<span class="t" style="left:4.00px;top:167.74px;font-size:12px;line-height:16px;color:#000;transform:scaleX(0.9102);">($22)</span>
<span class="t" style="left:34.50px;top:167.74px;font-size:12px;line-height:16px;color:#000;transform:scaleX(0.8512);">Oxygen Sensor Hea...</span>
<span class="t" style="left:146.00px;top:167.74px;font-size:12px;line-height:16px;color:#000;transform:scaleX(0.9102);">($07)</span>
<span class="t" style="left:176.50px;top:167.74px;font-size:12px;line-height:16px;color:#000;transform:scaleX(0.8824);">Undocumented CID</span>
<span class="t" style="left:446.20px;top:167.74px;font-size:12px;line-height:16px;color:#000;transform:scaleX(0.8882);">70.000</span>
<span class="t" style="left:511.40px;top:167.74px;font-size:12px;line-height:16px;color:#000;transform:scaleX(0.8882);">70.000</span>
<span class="t" style="left:571.50px;top:167.74px;font-size:12px;line-height:16px;color:#000;transform:scaleX(0.8991);">0.000</span>
<span class="t" style="left:630.50px;top:167.74px;font-size:12px;line-height:16px;color:#000;transform:scaleX(0.8785);">Unitless</span>
<span class="t" style="left:4.00px;top:181.74px;font-size:12px;line-height:16px;color:#000;transform:scaleX(0.9102);">($23)</span>
<span class="t" style="left:34.50px;top:181.74px;font-size:12px;line-height:16px;color:#000;transform:scaleX(0.8512);">Oxygen Sensor Hea...</span>
<span class="t" style="left:146.00px;top:181.74px;font-size:12px;line-height:16px;color:#000;transform:scaleX(0.9102);">($07)</span>
<span class="t" style="left:176.50px;top:181.74px;font-size:12px;line-height:16px;color:#000;transform:scaleX(0.8750);">Heated Oxygen Sensor</span>
<span class="t" style="left:446.20px;top:181.74px;font-size:12px;line-height:16px;color:#000;transform:scaleX(0.8882);">17.000</span>
<span class="t" style="left:511.40px;top:181.74px;font-size:12px;line-height:16px;color:#000;transform:scaleX(0.8991);">0.000</span>
<span class="t" style="left:571.50px;top:181.74px;font-size:12px;line-height:16px;color:#000;transform:scaleX(0.8882);">17.000</span>
<span class="t" style="left:630.50px;top:181.74px;font-size:12px;line-height:16px;color:#000;transform:scaleX(0.7778);">mV</span>
<span class="t" style="left:4.00px;top:195.74px;font-size:12px;line-height:16px;color:#000;transform:scaleX(0.9102);">($24)</span>
<span class="t" style="left:34.50px;top:195.74px;font-size:12px;line-height:16px;color:#000;transform:scaleX(0.8512);">Oxygen Sensor Hea...</span>
<span class="t" style="left:146.00px;top:195.74px;font-size:12px;line-height:16px;color:#000;transform:scaleX(0.9102);">($07)</span>
<span class="t" style="left:176.50px;top:195.74px;font-size:12px;line-height:16px;color:#000;transform:scaleX(0.8750);">Heated Oxygen Sensor</span>
<span class="t" style="left:446.20px;top:195.74px;font-size:12px;line-height:16px;color:#000;transform:scaleX(0.8882);">17.000</span>
<span class="t" style="left:511.40px;top:195.74px;font-size:12px;line-height:16px;color:#000;transform:scaleX(0.8991);">0.000</span>
<span class="t" style="left:571.50px;top:195.74px;font-size:12px;line-height:16px;color:#000;transform:scaleX(0.9129);">119.000</span>
<span class="t" style="left:630.50px;top:195.74px;font-size:12px;line-height:16px;color:#000;transform:scaleX(0.7778);">mV</span>
</div>
<div style="left:729px;top:303px;width:17px;height:208px;background:#f6f5ef;background-image:repeating-conic-gradient(#fff 0% 25%,#ece9d8 0% 50%);background-size:2px 2px;"></div>
<div style="left:729px;top:303px;width:17px;height:96px;background:#aca899"></div>
<div style="left:729px;top:287px;width:17px;height:16px;box-sizing:border-box;border-left:1px solid #f7f6ef;border-top:1px solid #f7f6ef;border-right:1px solid #a8a493;border-bottom:1px solid #a8a493;background:#ece9d8;"></div>
<svg style="position:absolute;left:729px;top:287px" width="17" height="17"><polygon points="4.5,10 8.5,6 12.5,10" fill="#000"/></svg>
<div style="left:729px;top:494px;width:17px;height:17px;box-sizing:border-box;border-left:1px solid #f7f6ef;border-top:1px solid #f7f6ef;border-right:1px solid #a8a493;border-bottom:1px solid #a8a493;background:#ece9d8;"></div>
<svg style="position:absolute;left:729px;top:494px" width="17" height="17"><polygon points="4.5,7 12.5,7 8.5,11" fill="#000"/></svg>
<div style="left:37px;top:511px;width:692px;height:17px;background:#f6f5ef;background-image:repeating-conic-gradient(#fff 0% 25%,#ece9d8 0% 50%);background-size:2px 2px;"></div>
<div style="left:729px;top:511px;width:17px;height:17px;background:#ece9d8"></div>
<div style="left:37px;top:511px;width:17px;height:17px;box-sizing:border-box;border-left:1px solid #f7f6ef;border-top:1px solid #f7f6ef;border-right:1px solid #a8a493;border-bottom:1px solid #a8a493;background:#ece9d8;"></div>
<svg style="position:absolute;left:37px;top:511px" width="17" height="17"><polygon points="9,4.5 9,12.5 5,8.5" fill="#000"/></svg>
<div style="left:712px;top:511px;width:17px;height:17px;box-sizing:border-box;border-left:1px solid #f7f6ef;border-top:1px solid #f7f6ef;border-right:1px solid #a8a493;border-bottom:1px solid #a8a493;background:#ece9d8;"></div>
<svg style="position:absolute;left:712px;top:511px" width="17" height="17"><polygon points="7,4.5 7,12.5 11,8.5" fill="#000"/></svg>
<div style="left:54px;top:511px;width:642px;height:17px;box-sizing:border-box;border-left:1px solid #f7f6ef;border-top:1px solid #c4c1b0;border-right:1px solid #a8a493;border-bottom:1px solid #a8a493;background:#ece9d8;"></div>
<div style="left:218px;top:261px;width:355px;height:45px;background:#ece9d8;border-left:2px solid #fff;border-top:2px solid #fff;box-sizing:border-box;border-right:1px solid #716f64;"></div>
<div style="left:220px;top:263px;width:350px;height:43px;background:#000"></div>
<span class="t" style="left:232.00px;top:269.58px;font-size:24px;line-height:31px;color:#fff;transform:scaleX(1.2982);font-weight:bold;-webkit-text-stroke:0.9px #fff;">Please Wait...</span>
<svg style="position:absolute;left:530px;top:267px" width="34" height="33" viewBox="0 0 34 33">
<path d="M10.8 1.8 L22 1.8 L24.5 4 L27.8 4.6 L29 8.5 L30.6 15 L30.9 24 L28.5 28 L25 31 L8.7 31 L5 28 L2.3 23 L2.3 16 L4.3 8.5 L7 5 Z" fill="#f40808"/>
<path d="M5.3 9.5 L8.2 7.5 L9 12 L8 20 L4.4 21 L3.6 16 Z" fill="#2a0000"/>
<path d="M22.6 2.6 L24.6 4.6 L24.2 6.6 L22.6 6.6 Z" fill="#000"/>
<path d="M10.2 2.6 L8 4.8 L8.8 6.6 L10 6.6 Z" fill="#000"/>
<path d="M26.5 10.5 L28.6 11 L29.4 16 L27.2 16.5 Z" fill="#300000"/>
<path d="M24 9 L28 9.5 L29.3 16 L26 17 Z" fill="#c00404"/>
<path d="M8.7 26.3 L25 26.3 L25 31 L8.7 31 Z" fill="#b00404"/>
<path d="M10 6.75 L22 6.75 L22 9.25 L15 9.7 L12.5 15.5 L10 15.5 L8.75 12.2 Z" fill="#8c8c8c"/>
<path d="M13.6 7.2 L16.2 7.2 L15.4 9.3 L13.2 9.3 Z" fill="#f4f4f4"/>
<rect x="12.1" y="2.8" width="9.2" height="1.2" fill="#fff"/>
<rect x="24.8" y="5" width="3.2" height="2" fill="#d8d8d8"/>
<rect x="3.75" y="16.3" width="1.7" height="2.5" fill="#909090"/>
<rect x="27" y="17.2" width="1.8" height="2.5" fill="#a0a0a0"/>
<rect x="12.9" y="19.7" width="6.8" height="1" fill="#ffb4b4"/>
<rect x="4.8" y="21.8" width="2.3" height="3.3" fill="#fff"/><rect x="25.8" y="21.8" width="2.2" height="3.3" fill="#fff"/>
<rect x="4.8" y="23.2" width="2.3" height="0.8" fill="#333"/><rect x="25.8" y="23.2" width="2.2" height="0.8" fill="#333"/>
<path d="M16.5 22.8 L18.2 24.5 L16.5 26.2 L14.8 24.5 Z" fill="#ffe400"/>
<rect x="4" y="6" width="1" height="1" fill="#f0f"/><rect x="2.8" y="17" width="1" height="1" fill="#f0f"/><rect x="30" y="23.5" width="1" height="1" fill="#f0f"/>
<rect x="12.3" y="9.6" width="19.6" height="7" fill="#000" opacity="0.8"/>
<rect x="11.3" y="14" width="1" height="3" fill="#00e000"/>
<text x="12.9" y="15.9" font-family="Liberation Sans" font-weight="bold" font-size="8.2" fill="#10ff10" textLength="18.8" lengthAdjust="spacingAndGlyphs">01101</text>
</svg>
<div style="left:220px;top:488px;width:350px;height:23px;background:#ece9d8;"></div>
<div style="left:220px;top:489px;width:347px;height:1px;background:#aca899"></div>
<div style="left:220px;top:490px;width:348px;height:1px;background:#fff"></div>
<div style="left:229px;top:501px;width:331px;height:10px;box-sizing:border-box;border:1px solid #aca899;border-bottom:none;"></div>
<div style="left:230px;top:502px;width:329px;height:9px;box-sizing:border-box;border-left:1px solid #fff;border-top:1px solid #fff;"></div>
<div style="left:560px;top:501px;width:1px;height:10px;background:#fff"></div>
<div style="left:231px;top:503px;width:328px;height:8px;overflow:hidden">
<span class="t" style="left:6.50px;top:3.54px;font-size:12px;line-height:16px;color:#000;transform:scaleX(0.8158);">Reviewing last monitored test results, please wait...</span>
</div>
<div style="left:11px;top:566px;width:761px;height:21px;box-sizing:border-box;border:1px solid #aca899;"></div>
<div style="left:12px;top:567px;width:759px;height:19px;box-sizing:border-box;border:1px solid #fff;border-right:none;border-bottom:none;"></div>
<div style="left:772px;top:566px;width:1px;height:22px;background:#fff"></div>
<div style="left:11px;top:587px;width:762px;height:1px;background:#fff"></div>
<div style="left:19px;top:570px;width:12px;height:12px;border-radius:50%;background:radial-gradient(circle at 45% 40%,#a82626,#8e1818 60%,#741010);"></div>
<span class="t" style="left:39.20px;top:569.74px;font-size:12px;line-height:16px;color:#000;transform:scaleX(0.8738);">Data Logging:</span>
<span class="t" style="left:113.20px;top:569.74px;font-size:12px;line-height:16px;color:#000;transform:scaleX(0.8546);">Off</span>
<span class="t" style="left:176.00px;top:569.74px;font-size:12px;line-height:16px;color:#000;transform:scaleX(0.8778);">Data Logging File:</span>
<span class="t" style="left:268.80px;top:569.74px;font-size:12px;line-height:16px;color:#000;transform:scaleX(0.9046);">Undefined</span>
<span class="t" style="left:616.50px;top:569.74px;font-size:12px;line-height:16px;color:#000;transform:scaleX(0.8353);">VIN:</span>
<span class="t" style="left:642.00px;top:569.74px;font-size:12px;line-height:16px;color:#000;transform:scaleX(0.8967);">Not Reported</span>
</div></body></html>
